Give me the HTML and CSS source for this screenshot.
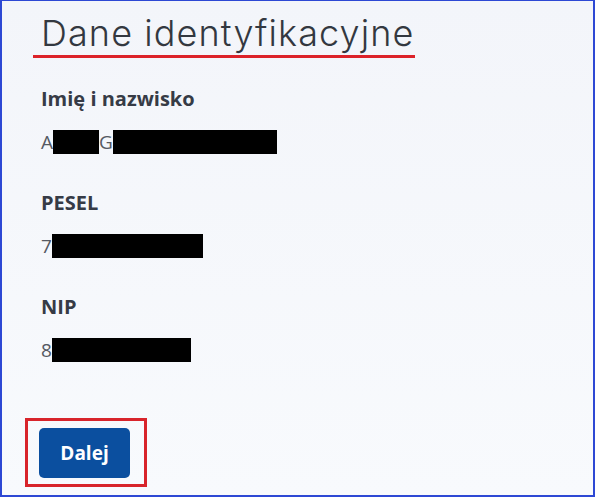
FILE: index.html
```html
<!DOCTYPE html>
<html lang="pl">
<head>
    <meta charset="UTF-8">
    <meta name="viewport" content="width=device-width, initial-scale=1.0">
    <title>Dane identyfikacyjne</title>
    <link rel="stylesheet" href="styles.css">
</head>
<body>
    <div class="page">
        <h1 class="title">Dane identyfikacyjne</h1>

        <div class="field">
            <p class="label">Imię i nazwisko</p>
            <p class="value">A<span class="mask mask-first"></span>G<span class="mask mask-last"></span></p>
        </div>

        <div class="field">
            <p class="label">PESEL</p>
            <p class="value">7<span class="mask mask-pesel"></span></p>
        </div>

        <div class="field">
            <p class="label">NIP</p>
            <p class="value">8<span class="mask mask-nip"></span></p>
        </div>

        <div class="actions">
            <div class="highlight">
                <button class="btn-next">Dalej</button>
            </div>
        </div>
    </div>
</body>
</html>
```

FILE: styles.css
```css
html, body {
    margin: 0;
    height: 100%;
}
body {
    font-family: "Open Sans", "Noto Sans", sans-serif;
    background: linear-gradient(180deg, #f3f5fa, #f8fafd);
    box-sizing: border-box;
    border-top: 1px solid #2d48d4;
    border-left: 2px solid #2d48d4;
    border-right: 2px solid #2d48d4;
    border-bottom: 2px solid #2d48d4;
    overflow: hidden;
}
.page {
    padding: 0 0 0 39px;
}
.title {
    display: inline-block;
    margin: 10px 0 0 -8px;
    padding: 0 0 0 8px;
    font-family: Inter, "Open Sans", sans-serif;
    font-weight: 300;
    font-size: 36px;
    line-height: 44px;
    color: #333840;
    letter-spacing: 1.1px;
    border-bottom: 3px solid #dc2229;
}
.field {
    margin-top: 28px;
}
.field + .field {
    margin-top: 36px;
}
.label {
    margin: 0;
    font-size: 20px;
    line-height: 26px;
    font-weight: 700;
    color: #363b46;
}
.value {
    margin: 18px 0 0;
    font-size: 19px;
    line-height: 24px;
    color: #555a63;
    display: flex;
    align-items: center;
}
.mask {
    display: inline-block;
    height: 24px;
    background: #000;
}
.mask-first { width: 46px; }
.mask-last { width: 164px; }
.mask-pesel { width: 151px; }
.mask-nip { width: 139px; }
.actions {
    margin-top: 56px;
    margin-left: -16px;
}
.highlight {
    display: inline-block;
    border: 3px solid #d8242b;
    padding: 7px 14px 6px 11px;
}
.btn-next {
    display: block;
    width: 91px;
    height: 50px;
    border: none;
    border-radius: 5px;
    background: #0b4f9f;
    color: #fff;
    font-family: "Open Sans", sans-serif;
    font-weight: 700;
    font-size: 19px;
    cursor: pointer;
}
```
